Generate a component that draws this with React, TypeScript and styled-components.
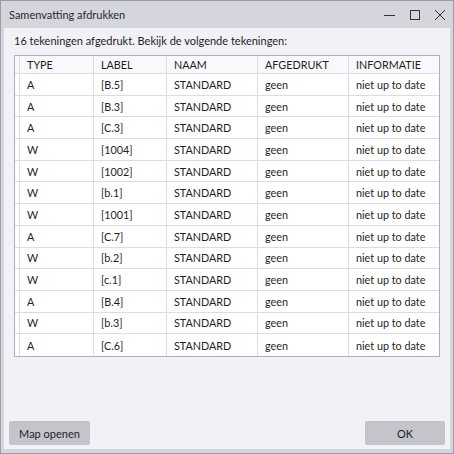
import React from 'react'
import styled, { createGlobalStyle } from 'styled-components'

const GlobalStyle = createGlobalStyle`
  html, body {
    margin: 0;
    padding: 0;
    background: #ffffff;
  }
  body {
    font-family: Lato, 'Noto Sans', sans-serif;
    color: #1e1e1e;
  }
`

const Window = styled.div`
  box-sizing: border-box;
  width: 454px;
  height: 454px;
  border: 1px solid #9c9ca4;
  background: #d5d6dd;
  display: flex;
  flex-direction: column;
  padding: 0 3px 4px 3px;
`

const TitleBar = styled.div`
  height: 27px;
  display: flex;
  align-items: center;
  padding-left: 5px;
  font-size: 11px;
  color: #2a2a2a;
`

const Title = styled.div`
  flex: 1;
`

const WinButtons = styled.div`
  display: flex;
  align-items: center;
  gap: 5px;
`

const WinButton = styled.div`
  width: 20px;
  height: 27px;
  display: flex;
  align-items: center;
  justify-content: center;
`

const Body = styled.div`
  flex: 1;
  background: #f2f2f6;
  display: flex;
  flex-direction: column;
  padding: 4px 10px 4px 10px;
`

const Message = styled.div`
  font-size: 11px;
  line-height: 16px;
  height: 16px;
  padding-top: 1px;
  margin-bottom: 6px;
`

const Table = styled.div`
  border: 1px solid #a3b2c6;
  background: #ffffff;
  font-size: 10.8px;
`

const Row = styled.div<{ $header?: boolean }>`
  display: grid;
  grid-template-columns: 5px 74px 73px 91px 91px 1fr;
  height: ${p => (p.$header ? '18px' : '21.7px')};
  background: ${p => (p.$header ? '#f9f9fb' : '#ffffff')};
  border-bottom: 1px solid #dcdde4;
  box-sizing: border-box;
  &:last-child {
    border-bottom: none;
  }
`

const Cell = styled.div`
  display: flex;
  align-items: center;
  padding-left: 7px;
  border-right: 1px solid #dcdde4;
  white-space: nowrap;
  overflow: hidden;
  &:last-child {
    border-right: none;
  }
`

const RowHead = styled.div`
  border-right: 1px solid #dcdde4;
`

const Spacer = styled.div`
  flex: 1;
`

const Footer = styled.div`
  display: flex;
  justify-content: space-between;
  margin: 0 -5px;
`

const Button = styled.div<{ $w: number }>`
  width: ${p => p.$w}px;
  height: 24px;
  background: #c3c4cc;
  border-radius: 2px;
  display: flex;
  align-items: center;
  justify-content: center;
  font-size: 11px;
  color: #1e1e1e;
`

const rows: [string, string][] = [
  ['A', '[B.5]'],
  ['A', '[B.3]'],
  ['A', '[C.3]'],
  ['W', '[1004]'],
  ['W', '[1002]'],
  ['W', '[b.1]'],
  ['W', '[1001]'],
  ['A', '[C.7]'],
  ['W', '[b.2]'],
  ['W', '[c.1]'],
  ['A', '[B.4]'],
  ['W', '[b.3]'],
  ['A', '[C.6]'],
]

export default function App() {
  return (
    <>
      <GlobalStyle />
      <Window>
        <TitleBar>
          <Title>Samenvatting afdrukken</Title>
          <WinButtons>
            <WinButton>
              <svg width="12" height="12" viewBox="0 0 12 12">
                <path d="M0 6.5h11" stroke="#333" strokeWidth="1" />
              </svg>
            </WinButton>
            <WinButton>
              <svg width="12" height="12" viewBox="0 0 12 12">
                <rect x="1.5" y="1.5" width="9" height="9" fill="none" stroke="#333" strokeWidth="1" />
              </svg>
            </WinButton>
            <WinButton>
              <svg width="12" height="12" viewBox="0 0 12 12">
                <path d="M1 1l10 10M11 1L1 11" stroke="#333" strokeWidth="1" />
              </svg>
            </WinButton>
          </WinButtons>
        </TitleBar>
        <Body>
          <Message>16 tekeningen afgedrukt. Bekijk de volgende tekeningen:</Message>
          <Table>
            <Row $header>
              <RowHead />
              <Cell>TYPE</Cell>
              <Cell>LABEL</Cell>
              <Cell>NAAM</Cell>
              <Cell>AFGEDRUKT</Cell>
              <Cell>INFORMATIE</Cell>
            </Row>
            {rows.map(([type, label], i) => (
              <Row key={i}>
                <RowHead />
                <Cell>{type}</Cell>
                <Cell>{label}</Cell>
                <Cell>STANDARD</Cell>
                <Cell>geen</Cell>
                <Cell>niet up to date</Cell>
              </Row>
            ))}
          </Table>
          <Spacer />
          <Footer>
            <Button $w={81}>Map openen</Button>
            <Button $w={80}>OK</Button>
          </Footer>
        </Body>
      </Window>
    </>
  )
}
